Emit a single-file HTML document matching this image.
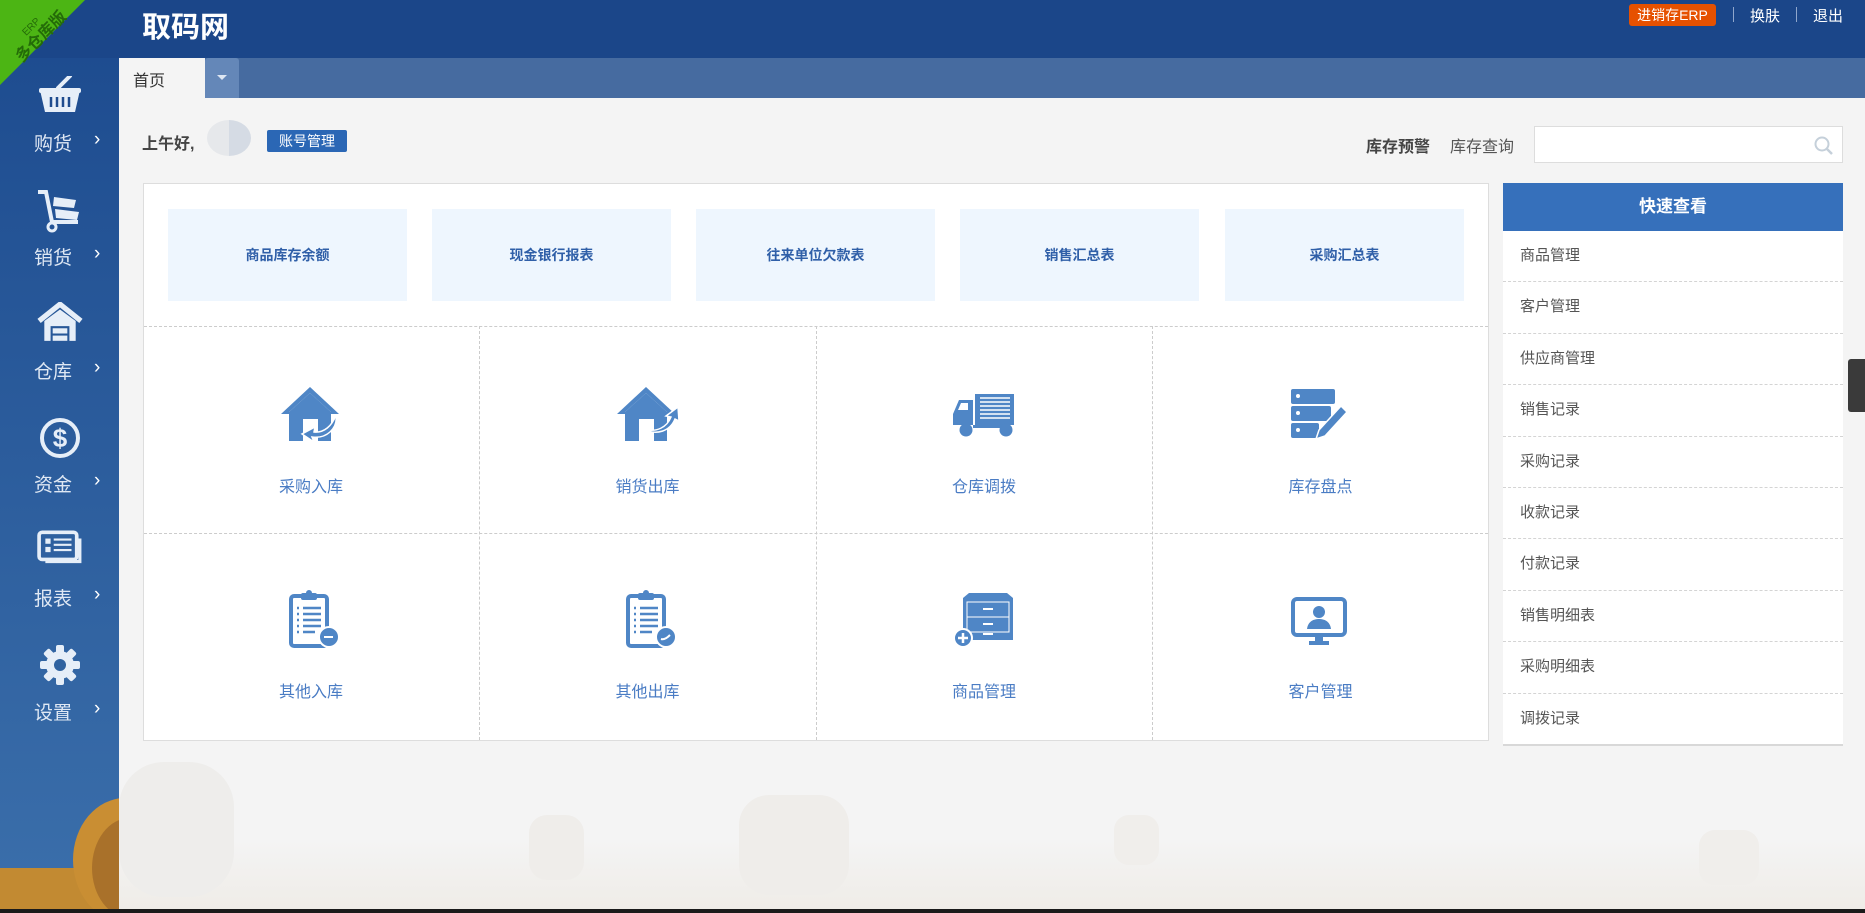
<!DOCTYPE html>
<html><head><meta charset="utf-8"><style>
*{margin:0;padding:0;box-sizing:border-box}
body{width:1865px;height:913px;overflow:hidden;background:#f4f4f4;font-family:"Liberation Sans","Noto Sans CJK SC",sans-serif;position:relative}
.a{position:absolute}
.top{left:0;top:0;width:1865px;height:58px;background:#1b4689}
.side{left:0;top:0;width:119px;height:909px;background:linear-gradient(#1c4a8e,#3b6fab)}
.mi{position:absolute;left:0;width:119px;text-align:center}
.mi .l{position:absolute;left:34px;font-size:19px;color:#dfe8f4;white-space:nowrap}
.mi .c{position:absolute;left:94px;font-size:19px;color:#fff}
.rb{position:absolute;top:209px;width:239px;height:92px;background:#eef6fe;color:#2f5fa8;font-size:14px;font-weight:bold;text-align:center;line-height:92px}
.cell{position:absolute;text-align:center;font-size:16px;color:#4a7cc4}
.q{position:absolute;left:1503px;width:340px;height:51.4px;border-bottom:1px dashed #d4d4d4;font-size:15px;color:#555;padding-left:17px;line-height:50px;background:#fff}
</style></head><body>
<!-- hay background -->
<svg class="a" style="left:119px;top:740px" width="1746" height="170">
<defs><linearGradient id="g" x1="0" y1="0" x2="0" y2="1"><stop offset="0" stop-color="#f4f4f4"/><stop offset="1" stop-color="#efece7"/></linearGradient></defs>
<rect x="0" y="100" width="1746" height="70" fill="url(#g)"/>
<rect x="0" y="22" width="115" height="135" rx="45" fill="#eeedeb"/>
<rect x="410" y="75" width="55" height="65" rx="18" fill="#efedea"/>
<rect x="620" y="55" width="110" height="100" rx="30" fill="#efedea"/>
<rect x="995" y="75" width="45" height="50" rx="15" fill="#f0eeeb"/>
<rect x="1580" y="90" width="60" height="55" rx="16" fill="#f0eeeb"/>
<rect x="1790" y="80" width="40" height="50" rx="10" fill="#f0eeeb"/>
</svg>
<div class="a side"></div>
<svg class="a" style="left:0;top:790px" width="119" height="120">
<rect x="0" y="78" width="119" height="42" fill="#c28a32"/>
<ellipse cx="125" cy="70" rx="52" ry="62" fill="#c98e33"/>
<ellipse cx="130" cy="78" rx="38" ry="50" fill="#a9712a"/>
</svg>
<div class="a top"></div>
<svg class="a" style="left:0;top:0" width="90" height="90"><polygon points="0,0 85,0 0,85" fill="#4cb514"/></svg>
<div class="a" style="left:-2px;top:20px;width:80px;text-align:center;transform:rotate(-45deg);color:#246b08;line-height:1">
<div style="font-size:10px">ERP</div><div style="font-size:16px;font-weight:bold;margin-top:1px">多仓库版</div></div>
<div class="a" style="left:142px;top:4px;font-size:29px;font-weight:bold;color:#fff">取码网</div>
<div class="a" style="left:1629px;top:4px;width:87px;height:22px;background:#e65100;border-radius:3px;color:#fff;font-size:14px;text-align:center;line-height:22px">进销存ERP</div>
<div class="a" style="left:1733px;top:7px;width:1px;height:15px;background:#8fa6cc"></div>
<div class="a" style="left:1750px;top:5px;color:#fff;font-size:15px">换肤</div>
<div class="a" style="left:1796px;top:7px;width:1px;height:15px;background:#8fa6cc"></div>
<div class="a" style="left:1813px;top:5px;color:#fff;font-size:15px">退出</div>
<div class="a" style="left:119px;top:58px;width:1746px;height:40px;background:#466ba0"></div>
<div class="a" style="left:119px;top:58px;width:86px;height:40px;background:#f4f4f4;font-size:16px;color:#333;padding:9px 0 0 14px">首页</div>
<div class="a" style="left:205px;top:58px;width:34px;height:40px;background:#6487b8;border-radius:3px 3px 0 0"><div style="margin:17px auto 0;width:0;height:0;border:5px solid transparent;border-top-color:#dde6f2"></div></div>
<!-- sidebar menu -->
<div class="mi" style="top:76px"><svg width="44" height="38" viewBox="0 0 44 38"><path d="M2 14h40l-5 22H7z" fill="#e6eef8"/><rect x="1" y="12" width="42" height="5" rx="2" fill="#e6eef8"/><path d="M20 12L32 0" stroke="#e6eef8" stroke-width="4" stroke-linecap="round"/><g stroke="#1e4b8e" stroke-width="2.5"><path d="M13 21v10M19 21v10M25 21v10M31 21v10"/></g></svg></div>
<div class="mi" style="top:129px"><span class="l">购货</span><span class="c" style="top:0">›</span></div>
<div class="mi" style="top:189px"><svg width="48" height="44" viewBox="0 0 48 44"><path d="M2 3h8l6 30h26" stroke="#e6eef8" stroke-width="4" fill="none"/><circle cx="16" cy="38" r="4" stroke="#e6eef8" stroke-width="3" fill="none"/><path d="M18 8l22 3-2 8-21-2zM19 20l24 3-2 8-21-2z" fill="#e6eef8"/></svg></div>
<div class="mi" style="top:243px"><span class="l">销货</span><span class="c" style="top:0">›</span></div>
<div class="mi" style="top:302px"><svg width="46" height="40" viewBox="0 0 44 38"><path d="M2 18L22 2l20 16" stroke="#e6eef8" stroke-width="5" fill="none"/><path d="M7 18L22 7l15 11v19H31V23H13v14H7z" fill="#e6eef8"/><rect x="15" y="25" width="14" height="5" fill="#e6eef8"/><rect x="15" y="32" width="14" height="5" fill="#e6eef8"/></svg></div>
<div class="mi" style="top:357px"><span class="l">仓库</span><span class="c" style="top:0">›</span></div>
<div class="mi" style="top:417px"><svg width="42" height="42"><circle cx="21" cy="21" r="18" stroke="#e6eef8" stroke-width="4" fill="none"/><text x="21" y="30" text-anchor="middle" font-size="26" font-weight="bold" fill="#e6eef8" font-family="Liberation Sans">$</text></svg></div>
<div class="mi" style="top:470px"><span class="l">资金</span><span class="c" style="top:0">›</span></div>
<div class="mi" style="top:530px"><svg width="46" height="38" viewBox="0 0 44 36"><rect x="2" y="2" width="36" height="26" rx="3" stroke="#e6eef8" stroke-width="3.5" fill="none"/><path d="M41 8v22H8" stroke="#e6eef8" stroke-width="3" fill="none"/><rect x="8" y="8" width="5" height="5" fill="#e6eef8"/><rect x="8" y="16" width="5" height="5" fill="#e6eef8"/><path d="M16 9h17M16 14h17M16 19h17" stroke="#e6eef8" stroke-width="2"/></svg></div>
<div class="mi" style="top:584px"><span class="l">报表</span><span class="c" style="top:0">›</span></div>
<div class="mi" style="top:644px"><svg width="42" height="42" viewBox="0 0 42 42"><g fill="#e6eef8"><circle cx="21" cy="21" r="14"/><rect x="17" y="1" width="8" height="40" rx="2"/><rect x="1" y="17" width="40" height="8" rx="2"/><rect x="17" y="1" width="8" height="40" rx="2" transform="rotate(45 21 21)"/><rect x="17" y="1" width="8" height="40" rx="2" transform="rotate(-45 21 21)"/></g><circle cx="21" cy="21" r="6" fill="#2f62a0"/></svg></div>
<div class="mi" style="top:698px"><span class="l">设置</span><span class="c" style="top:0">›</span></div>
<!-- greeting -->
<div class="a" style="left:142px;top:130px;font-size:16px;font-weight:bold;color:#444">上午好,</div>
<div class="a" style="left:207px;top:120px;width:44px;height:36px;border-radius:50%;background:linear-gradient(90deg,#e6e8eb 50%,#d5dbe4 50%)"></div>
<div class="a" style="left:267px;top:130px;width:80px;height:22px;background:#2b67b5;border-radius:2px;color:#fff;font-size:14px;text-align:center;line-height:22px">账号管理</div>
<div class="a" style="left:1366px;top:133px;font-size:16px;font-weight:bold;color:#444">库存预警</div>
<div class="a" style="left:1450px;top:133px;font-size:16px;color:#555">库存查询</div>
<div class="a" style="left:1534px;top:126px;width:309px;height:37px;background:#fff;border:1px solid #ddd"><svg style="position:absolute;right:8px;top:9px" width="20" height="20"><circle cx="8" cy="8" r="6.5" stroke="#c5d0da" stroke-width="2" fill="none"/><path d="M13 13l5 5" stroke="#c5d0da" stroke-width="2.5"/></svg></div>
<!-- main panel -->
<div class="a" style="left:143px;top:183px;width:1346px;height:558px;background:#fff;border:1px solid #ddd"></div>
<div class="rb" style="left:168px">商品库存余额</div>
<div class="rb" style="left:432px">现金银行报表</div>
<div class="rb" style="left:696px">往来单位欠款表</div>
<div class="rb" style="left:960px">销售汇总表</div>
<div class="rb" style="left:1225px">采购汇总表</div>
<div class="a" style="left:144px;top:326px;width:1344px;border-top:1px dashed #ccc"></div>
<div class="a" style="left:144px;top:533px;width:1344px;border-top:1px dashed #ccc"></div>
<div class="a" style="left:479px;top:326px;height:414px;border-left:1px dashed #ccc"></div>
<div class="a" style="left:816px;top:326px;height:414px;border-left:1px dashed #ccc"></div>
<div class="a" style="left:1152px;top:326px;height:414px;border-left:1px dashed #ccc"></div>
<!-- row1 icons -->
<svg class="a" style="left:281px;top:387px" width="60" height="56" viewBox="0 0 60 56"><path d="M0 27L29 0l29 27h-8v-2L29 6 8 25v2z" fill="#4f86c6"/><path d="M8 25L29 6l21 19v29H37V32H22v22H8z" fill="#4f86c6"/><path d="M55 28c2 14-10 24-24 22l2 5-12-8 13-7-1 5c10 1 18-6 22-17z" fill="#4f86c6" stroke="#fff" stroke-width="1.5"/></svg>
<svg class="a" style="left:617px;top:387px" width="62" height="56" viewBox="0 0 62 56"><path d="M0 27L29 0l29 27h-8v-2L29 6 8 25v2z" fill="#4f86c6"/><path d="M8 25L29 6l21 19v29H37V32H22v22H8z" fill="#4f86c6"/><path d="M26 42c14 4 24-2 28-12l-5-1 12-9 1 14-4-2c-5 12-18 17-32 10z" fill="#4f86c6" stroke="#fff" stroke-width="1.5"/></svg>
<svg class="a" style="left:953px;top:394px" width="62" height="44" viewBox="0 0 62 44"><rect x="22" y="0" width="39" height="31" fill="#4f86c6"/><g stroke="#fff" stroke-width="1.5"><path d="M27 4h30M27 8h30M27 12h30M27 16h30M27 20h30M27 24h30"/></g><path d="M0 20l6-14h14v25H0z" fill="#4f86c6"/><path d="M5 16l3-7h7v7z" fill="#fff"/><rect x="20" y="31" width="30" height="3" fill="#4f86c6"/><circle cx="13" cy="36" r="6.5" fill="#4f86c6"/><circle cx="53" cy="36" r="6.5" fill="#4f86c6"/></svg>
<svg class="a" style="left:1291px;top:389px" width="58" height="52" viewBox="0 0 58 52"><g fill="#4f86c6"><rect x="0" y="0" width="44" height="15" rx="2"/><rect x="0" y="17" width="40" height="15" rx="2"/><rect x="0" y="34" width="28" height="15" rx="2"/></g><g fill="#fff"><circle cx="7" cy="7" r="2"/><circle cx="7" cy="24" r="2"/><circle cx="7" cy="41" r="2"/></g><path d="M50 17l6 6-22 24-9 3 3-9z" fill="#4f86c6" stroke="#fff" stroke-width="1.5"/></svg>
<div class="cell" style="left:143px;width:336px;top:473px">采购入库</div>
<div class="cell" style="left:479px;width:337px;top:473px">销货出库</div>
<div class="cell" style="left:816px;width:336px;top:473px">仓库调拨</div>
<div class="cell" style="left:1152px;width:337px;top:473px">库存盘点</div>
<!-- row2 icons -->
<svg class="a" style="left:289px;top:590px" width="52" height="60" viewBox="0 0 52 60"><rect x="2" y="6" width="36" height="50" rx="3" stroke="#4f86c6" stroke-width="4" fill="#fff"/><rect x="12" y="3" width="16" height="7" rx="2" fill="#4f86c6"/><circle cx="20" cy="3" r="3" fill="#4f86c6"/><g stroke="#4f86c6" stroke-width="2.5"><path d="M8 18h2M14 18h18M8 24h2M14 24h18M8 30h2M14 30h18M8 36h2M14 36h18M8 42h2M14 42h12"/></g><circle cx="40" cy="47" r="10" fill="#4f86c6" stroke="#fff" stroke-width="2"/><path d="M35 47h9" stroke="#fff" stroke-width="2"/></svg>
<svg class="a" style="left:626px;top:590px" width="52" height="60" viewBox="0 0 52 60"><rect x="2" y="6" width="36" height="50" rx="3" stroke="#4f86c6" stroke-width="4" fill="#fff"/><rect x="12" y="3" width="16" height="7" rx="2" fill="#4f86c6"/><circle cx="20" cy="3" r="3" fill="#4f86c6"/><g stroke="#4f86c6" stroke-width="2.5"><path d="M8 18h2M14 18h18M8 24h2M14 24h18M8 30h2M14 30h18M8 36h2M14 36h18M8 42h2M14 42h12"/></g><circle cx="40" cy="47" r="10" fill="#4f86c6" stroke="#fff" stroke-width="2"/><path d="M35 49c3 1 6-1 9-4" stroke="#fff" stroke-width="2" fill="none"/></svg>
<svg class="a" style="left:953px;top:590px" width="62" height="60" viewBox="0 0 62 60"><path d="M10 8l6-5h38l6 5v42H10z" fill="#4f86c6"/><rect x="14" y="12" width="42" height="15" fill="none" stroke="#fff" stroke-width="1"/><rect x="14" y="27" width="42" height="15" fill="none" stroke="#fff" stroke-width="1"/><path d="M30 19h10M30 34h10M30 44h10" stroke="#fff" stroke-width="2"/><circle cx="10" cy="48" r="9" fill="#4f86c6" stroke="#fff" stroke-width="2"/><path d="M5 48h10M10 43v10" stroke="#fff" stroke-width="2.5"/></svg>
<svg class="a" style="left:1291px;top:597px" width="56" height="50" viewBox="0 0 56 50"><rect x="2" y="2" width="52" height="36" rx="4" stroke="#4f86c6" stroke-width="4" fill="#fff"/><circle cx="28" cy="15" r="6" fill="#4f86c6"/><path d="M16 32c1-8 7-10 12-10s11 2 12 10z" fill="#4f86c6"/><path d="M24 38h8v6h6v4H18v-4h6z" fill="#4f86c6"/></svg>
<div class="cell" style="left:143px;width:336px;top:678px">其他入库</div>
<div class="cell" style="left:479px;width:337px;top:678px">其他出库</div>
<div class="cell" style="left:816px;width:336px;top:678px">商品管理</div>
<div class="cell" style="left:1152px;width:337px;top:678px">客户管理</div>
<!-- quick panel -->
<div class="a" style="left:1503px;top:183px;width:340px;height:563px;background:#fff;border:1px solid #d8d8d8"></div>
<div class="a" style="left:1503px;top:183px;width:340px;height:48px;background:#3670bb;color:#fff;font-size:17px;font-weight:bold;text-align:center;line-height:48px">快速查看</div>
<div class="q" style="top:231px">商品管理</div>
<div class="q" style="top:282.4px">客户管理</div>
<div class="q" style="top:333.8px">供应商管理</div>
<div class="q" style="top:385.2px">销售记录</div>
<div class="q" style="top:436.6px">采购记录</div>
<div class="q" style="top:488px">收款记录</div>
<div class="q" style="top:539.4px">付款记录</div>
<div class="q" style="top:590.8px">销售明细表</div>
<div class="q" style="top:642.2px">采购明细表</div>
<div class="q" style="top:693.6px;border-bottom:1px solid #d8d8d8">调拨记录</div>
<div class="a" style="left:1848px;top:359px;width:17px;height:53px;background:#3a3a3a;border-radius:3px 0 0 3px"></div>
<div class="a" style="left:0;top:909px;width:1865px;height:4px;background:#1a1a1a"></div>
</body></html>
